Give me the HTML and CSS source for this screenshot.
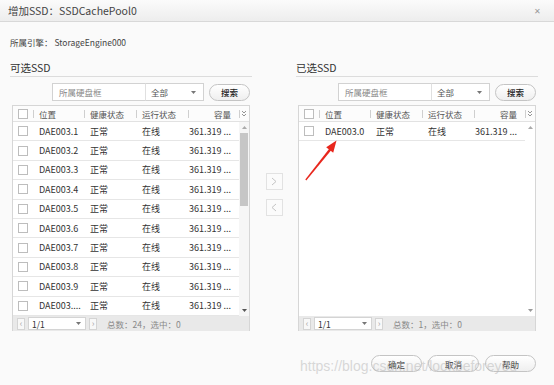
FILE: index.html
```html
<!DOCTYPE html>
<html lang="zh">
<head>
<meta charset="utf-8">
<title>增加SSD</title>
<link rel="stylesheet" href="styles.css">
</head>
<body>
<div class="dialog">
  <div class="titlebar">
    <span class="title">增加SSD：SSDCachePool0</span>
    <span class="close">✕</span>
  </div>
  <div class="content">
    <div class="engine">所属引擎： StorageEngine000</div>
    <div class="panels">
      <section class="panel">
        <div class="panel-title">可选SSD</div>
        <div class="search">
          <div class="input">所属硬盘框</div>
          <div class="select">全部<svg class="tri" width="5" height="3" viewBox="0 0 5 3"><path d="M0 0H5L2.5 3Z"/></svg></div>
          <div class="btn">搜索</div>
        </div>
        <div class="grid">
          <div class="head">
            <div class="hcell chk"><span class="box"></span></div>
            <div class="hcell">位置</div>
            <div class="hcell">健康状态</div>
            <div class="hcell">运行状态</div>
            <div class="hcell right">容量</div>
            <div class="hcell more"><svg width="6" height="7" viewBox="0 0 6 7"><path d="M1 1L3 3L5 1M1 4L3 6L5 4" fill="none" stroke="#888" stroke-width="0.9"/></svg></div>
          </div>
          <div class="gbody">
            <div class="rows">
              <div class="row"><span class="cell chk"><span class="box"></span></span><span class="cell">DAE003.1</span><span class="cell">正常</span><span class="cell">在线</span><span class="cell right">361.319 ...</span></div>
              <div class="row"><span class="cell chk"><span class="box"></span></span><span class="cell">DAE003.2</span><span class="cell">正常</span><span class="cell">在线</span><span class="cell right">361.319 ...</span></div>
              <div class="row"><span class="cell chk"><span class="box"></span></span><span class="cell">DAE003.3</span><span class="cell">正常</span><span class="cell">在线</span><span class="cell right">361.319 ...</span></div>
              <div class="row"><span class="cell chk"><span class="box"></span></span><span class="cell">DAE003.4</span><span class="cell">正常</span><span class="cell">在线</span><span class="cell right">361.319 ...</span></div>
              <div class="row"><span class="cell chk"><span class="box"></span></span><span class="cell">DAE003.5</span><span class="cell">正常</span><span class="cell">在线</span><span class="cell right">361.319 ...</span></div>
              <div class="row"><span class="cell chk"><span class="box"></span></span><span class="cell">DAE003.6</span><span class="cell">正常</span><span class="cell">在线</span><span class="cell right">361.319 ...</span></div>
              <div class="row"><span class="cell chk"><span class="box"></span></span><span class="cell">DAE003.7</span><span class="cell">正常</span><span class="cell">在线</span><span class="cell right">361.319 ...</span></div>
              <div class="row"><span class="cell chk"><span class="box"></span></span><span class="cell">DAE003.8</span><span class="cell">正常</span><span class="cell">在线</span><span class="cell right">361.319 ...</span></div>
              <div class="row"><span class="cell chk"><span class="box"></span></span><span class="cell">DAE003.9</span><span class="cell">正常</span><span class="cell">在线</span><span class="cell right">361.319 ...</span></div>
              <div class="row"><span class="cell chk"><span class="box"></span></span><span class="cell">DAE003....</span><span class="cell">正常</span><span class="cell">在线</span><span class="cell right">361.319 ...</span></div>
            </div>
            <div class="vscroll">
              <svg class="sarrow" width="5" height="3" viewBox="0 0 5 3"><path d="M0 3H5L2.5 0Z" fill="#aaa"/></svg>
              <div class="thumb"></div>
              <div class="spacer"></div>
              <svg class="sarrow" width="5" height="3" viewBox="0 0 5 3"><path d="M0 0H5L2.5 3Z" fill="#555"/></svg>
            </div>
          </div>
          <div class="pager">
            <span class="pbtn">‹</span>
            <span class="psel">1/1<svg class="tri" width="5" height="3" viewBox="0 0 5 3"><path d="M0 0H5L2.5 3Z"/></svg></span>
            <span class="pbtn">›</span>
            <span class="ptext">总数：24，选中：0</span>
          </div>
        </div>
      </section>

      <div class="transfer">
        <div class="tbtn"><svg width="6" height="9" viewBox="0 0 6 9"><path d="M1 1L5 4.5L1 8" fill="none" stroke="#c4c4c4" stroke-width="1"/></svg></div>
        <div class="tbtn"><svg width="6" height="9" viewBox="0 0 6 9"><path d="M5 1L1 4.5L5 8" fill="none" stroke="#c4c4c4" stroke-width="1"/></svg></div>
      </div>

      <section class="panel">
        <div class="panel-title">已选SSD</div>
        <div class="search">
          <div class="input">所属硬盘框</div>
          <div class="select">全部<svg class="tri" width="5" height="3" viewBox="0 0 5 3"><path d="M0 0H5L2.5 3Z"/></svg></div>
          <div class="btn">搜索</div>
        </div>
        <div class="grid">
          <div class="head">
            <div class="hcell chk"><span class="box"></span></div>
            <div class="hcell">位置</div>
            <div class="hcell">健康状态</div>
            <div class="hcell">运行状态</div>
            <div class="hcell right">容量</div>
            <div class="hcell more"><svg width="6" height="7" viewBox="0 0 6 7"><path d="M1 1L3 3L5 1M1 4L3 6L5 4" fill="none" stroke="#888" stroke-width="0.9"/></svg></div>
          </div>
          <div class="gbody">
            <div class="rows">
              <div class="row"><span class="cell chk"><span class="box"></span></span><span class="cell">DAE003.0</span><span class="cell">正常</span><span class="cell">在线</span><span class="cell right">361.319 ...</span></div>
            </div>
            <div class="vscroll empty">
              <svg class="sarrow" width="5" height="3" viewBox="0 0 5 3"><path d="M0 3H5L2.5 0Z" fill="#aaa"/></svg>
              <div class="spacer"></div>
              <svg class="sarrow" width="5" height="3" viewBox="0 0 5 3"><path d="M0 0H5L2.5 3Z" fill="#999"/></svg>
            </div>
          </div>
          <div class="pager">
            <span class="pbtn">‹</span>
            <span class="psel">1/1<svg class="tri" width="5" height="3" viewBox="0 0 5 3"><path d="M0 0H5L2.5 3Z"/></svg></span>
            <span class="pbtn">›</span>
            <span class="ptext">总数：1，选中：0</span>
          </div>
        </div>
      </section>
    </div>

    <div class="actions">
      <div class="btn wide">确定</div>
      <div class="btn wide">取消</div>
      <div class="btn wide">帮助</div>
    </div>
  </div>

  <div class="watermark">https://blog.csdn.net/lookbeforeyou</div>

  <svg class="annot" width="554" height="385" viewBox="0 0 554 385">
    <polygon points="305.3,179.6 306.3,180.4 331.6,149.8 329.6,148.2" fill="#e8261c"/>
    <polygon points="336.5,140.5 326.2,147.2 333.2,152.8" fill="#e8261c"/>
  </svg>
</div>
</body>
</html>
```

FILE: styles.css
```css
* { box-sizing: border-box; margin: 0; padding: 0; }

html, body {
  width: 554px;
  height: 385px;
  overflow: hidden;
}

body {
  font-family: "Noto Sans CJK SC", "Noto Sans", sans-serif;
  font-size: 9px;
  color: #333;
  background: #fafafa;
}

.dialog {
  position: relative;
  width: 554px;
  height: 385px;
  background: #fafafa;
}

.titlebar {
  height: 22px;
  display: flex;
  align-items: center;
  justify-content: space-between;
  padding: 0 13px 0 8px;
  background: linear-gradient(#fbfbfb, #ededed);
  border-bottom: 1px solid #d8d8d8;
}

.title {
  font-size: 10.5px;
  color: #444;
  line-height: 14px;
}

.close {
  font-size: 8px;
  color: #999;
  line-height: 10px;
}

.content {
  padding: 14px 16px 0 10px;
}

.engine {
  height: 12px;
  line-height: 12px;
  font-size: 8.5px;
  color: #444;
}

.panels {
  display: flex;
  margin-top: 13px;
}

.panel {
  width: 242px;
}

.panel-title {
  font-size: 10.5px;
  line-height: 14px;
  height: 16px;
  padding-bottom: 1px;
  color: #333;
  border-bottom: 1px solid #dcdcdc;
}

.search {
  display: flex;
  justify-content: flex-end;
  align-items: center;
  margin-top: 6px;
  padding-right: 2px;
  height: 18px;
}

.input {
  width: 94px;
  height: 18px;
  line-height: 16px;
  padding-left: 6px;
  background: #fff;
  border: 1px solid #d2d2d2;
  color: #888;
  font-size: 8.5px;
}

.select {
  width: 59px;
  height: 18px;
  display: flex;
  align-items: center;
  justify-content: space-between;
  padding: 0 7px 0 5px;
  background: #fff;
  border: 1px solid #d2d2d2;
  border-left: 1px solid #e0e0e0;
  margin-left: -1px;
  color: #555;
  font-size: 8.5px;
}

.tri { fill: #777; }

.btn {
  width: 41px;
  height: 17px;
  margin-left: 5px;
  border: 1px solid #c4c4c4;
  border-radius: 9px;
  background: linear-gradient(#ffffff, #efefef);
  display: flex;
  align-items: center;
  justify-content: center;
  font-size: 8.5px;
  color: #222;
  font-weight: 500;
}

.grid {
  margin: 4px 2px 0;
  border: 1px solid #d6d6d6;
  border-bottom: none;
  background: #fff;
}

.head {
  display: grid;
  grid-template-columns: 20px 51px 52px 52px 51px 10px;
  height: 16px;
  border-bottom: 1px solid #e2e2e2;
  background: #fcfcfc;
}

.hcell {
  display: flex;
  align-items: center;
  padding-left: 6px;
  color: #555;
  font-size: 8.5px;
}

.hcell + .hcell {
  background: linear-gradient(#cfcfcf, #cfcfcf) left center / 1px 8px no-repeat;
}

.hcell.right, .cell.right {
  justify-content: flex-end;
  padding-left: 0;
  padding-right: 8px;
}

.hcell.chk, .cell.chk {
  justify-content: center;
  padding-left: 0;
}

.hcell.more {
  padding-left: 2px;
  justify-content: flex-start;
}

.box {
  width: 10px;
  height: 10px;
  background: #fff;
  border: 1px solid #bdbdbd;
}

.gbody {
  display: flex;
  height: 194px;
}

.rows {
  width: 226px;
}

.row {
  display: grid;
  grid-template-columns: 20px 51px 52px 52px 51px;
  height: 19.4px;
  border-bottom: 1px solid #e6e6e6;
}

.cell {
  display: flex;
  align-items: center;
  padding-left: 6px;
  white-space: nowrap;
  overflow: hidden;
  color: #333;
}

.vscroll {
  width: 10px;
  display: flex;
  flex-direction: column;
  align-items: center;
  background: #f6f6f6;
  padding: 4px 0 4px;
}

.vscroll.empty {
  background: #fff;
}

.sarrow { display: block; flex: none; }

.thumb {
  width: 8px;
  height: 73px;
  margin-top: 4px;
  background: #c6c6c6;
}

.spacer { flex: 1; }

.pager {
  height: 15px;
  display: flex;
  align-items: center;
  padding-left: 4px;
  background: #e9e9e9;
  font-size: 8.5px;
}

.pbtn {
  width: 8px;
  height: 12px;
  display: flex;
  align-items: center;
  justify-content: center;
  background: #f8f8f8;
  border: 1px solid #d4d4d4;
  color: #aaa;
  font-size: 9px;
  line-height: 10px;
}

.psel {
  width: 58px;
  height: 13px;
  margin: 0 3px 0 3px;
  display: flex;
  align-items: center;
  justify-content: space-between;
  padding: 0 4px 0 3px;
  background: #fff;
  border: 1px solid #d4d4d4;
  color: #333;
}

.ptext {
  margin-left: 10px;
  color: #888;
}

.transfer {
  width: 44px;
  display: flex;
  flex-direction: column;
  align-items: center;
  gap: 9px;
  padding-top: 112px;
}

.tbtn {
  width: 17px;
  height: 17px;
  border: 1px solid #e2e2e2;
  background: #fbfbfb;
  display: flex;
  align-items: center;
  justify-content: center;
}

.actions {
  display: flex;
  justify-content: flex-end;
  gap: 6px;
  margin-top: 24px;
  padding-right: 2px;
}

.btn.wide {
  width: 51px;
  margin-left: 0;
  font-weight: 400;
  color: #333;
}

.watermark {
  position: absolute;
  left: 300px;
  top: 357px;
  font-family: "Liberation Sans", sans-serif;
  font-size: 14px;
  line-height: 18px;
  color: rgba(185, 185, 185, 0.55);
  white-space: nowrap;
  pointer-events: none;
}

.annot {
  position: absolute;
  left: 0;
  top: 0;
  pointer-events: none;
}
```
